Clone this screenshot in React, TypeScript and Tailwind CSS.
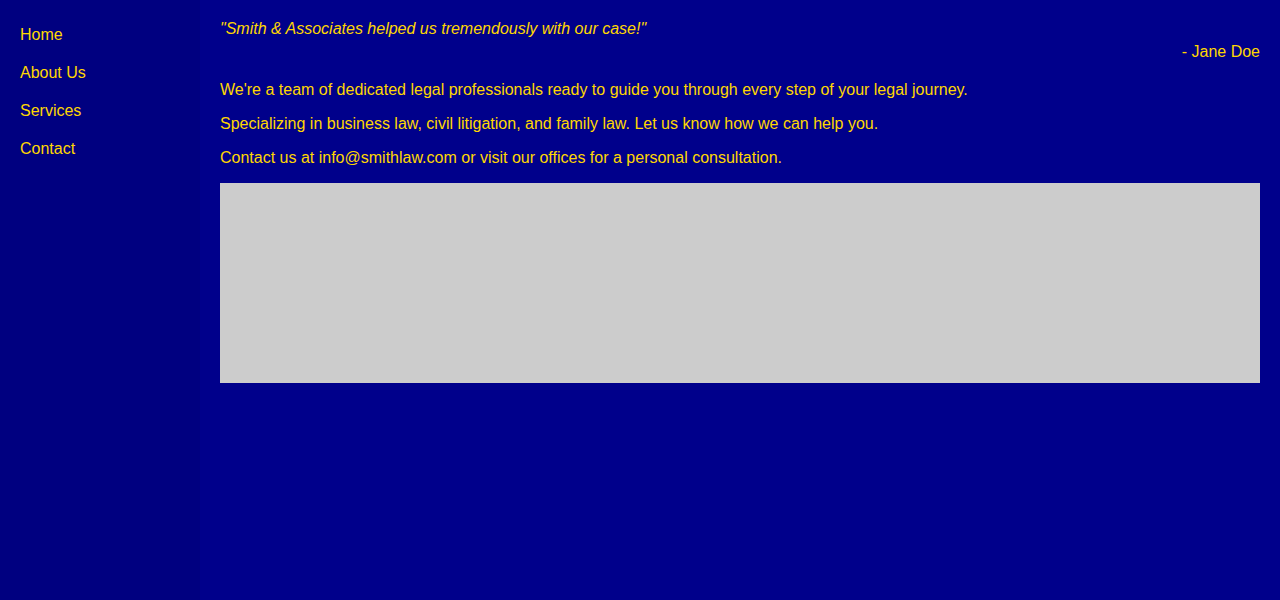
import React from "react";

const links = ["Home", "About Us", "Services", "Contact"];

const App = () => {
  return (
    <div
      className="flex min-h-[600px] w-full bg-[#00008b] text-[16px] leading-[18px] text-[#ffd700]"
      style={{ fontFamily: '"Liberation Sans", Arial, sans-serif' }}
    >
      <nav className="w-[200px] shrink-0 bg-[#000080] px-[20px] pt-[26px]">
        <ul className="flex flex-col gap-[20px]">
          {links.map((l) => (
            <li key={l}>
              <a href="#" className="text-[#ffd700]">
                {l}
              </a>
            </li>
          ))}
        </ul>
      </nav>

      <main className="flex-1 p-[20px]">
        <blockquote>
          <p className="italic">
            "Smith &amp; Associates helped us tremendously with our case!"
          </p>
          <p className="mt-[5px] text-right">- Jane Doe</p>
        </blockquote>

        <div className="mt-[20px] flex flex-col gap-[16px]">
          <p>
            We're a team of dedicated legal professionals ready to guide you
            through every step of your legal journey.
          </p>
          <p>
            Specializing in business law, civil litigation, and family law. Let
            us know how we can help you.
          </p>
          <p>
            Contact us at info@smithlaw.com or visit our offices for a personal
            consultation.
          </p>
        </div>

        <div className="mt-[16px] h-[200px] w-full bg-[#cccccc]"></div>
      </main>
    </div>
  );
};

export default App;
